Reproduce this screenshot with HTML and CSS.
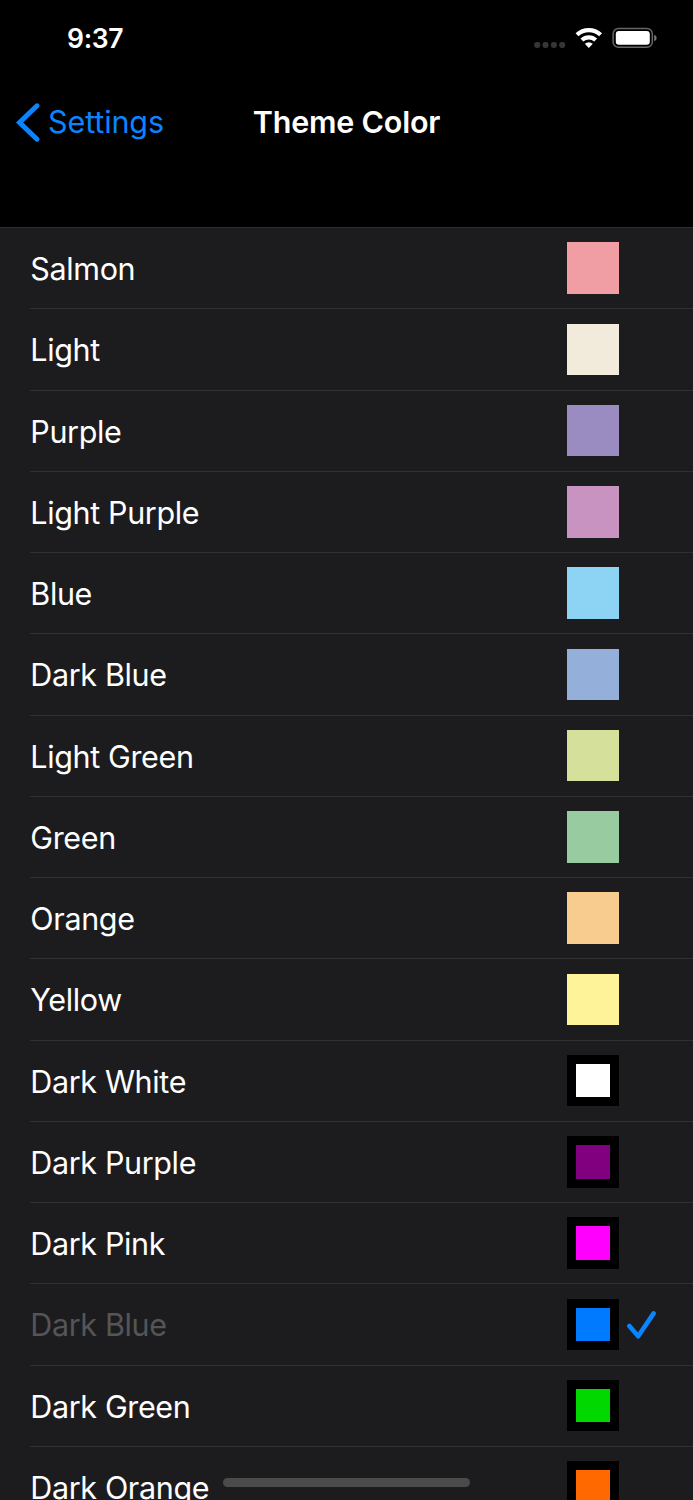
FILE: index.html
```html
<!DOCTYPE html>
<html lang="en">
<head>
<meta charset="utf-8">
<title>Theme Color</title>
<link rel="stylesheet" href="styles.css">
</head>
<body>
<div class="screen">
  <header class="header">
    <div class="status">
      <span class="time">9:37</span>
      <svg class="status-icons" width="124" height="24" viewBox="534 26 124 24">
        <g fill="#363636">
          <rect x="534.2" y="42" width="6" height="6" rx="2.4"/><rect x="542.5" y="42" width="6" height="6" rx="2.4"/><rect x="550.9" y="42" width="6" height="6" rx="2.4"/><rect x="559.2" y="42" width="6" height="6" rx="2.4"/>
        </g>
        <g fill="none" stroke="#fff" stroke-width="4.2">
          <path d="M577 34.8A17.2 17.2 0 0 1 600.6 34.8"/>
          <path d="M581.9 40.1A9.9 9.9 0 0 1 595.7 40.1"/>
        </g>
        <path d="M588.8 47.9L584.8 43.8Q588.8 40.5 592.8 43.8Z" fill="#fff"/>
        <rect x="613.1" y="28.5" width="39.2" height="18.8" rx="5.4" fill="none" stroke="#666" stroke-width="1.5"/>
        <rect x="615.8" y="31" width="34" height="13.8" rx="3.2" fill="#fff"/>
        <path d="M654.2 34.7Q656.7 35.4 656.7 38T654.2 41.3Z" fill="#777"/>
      </svg>
    </div>
    <nav class="nav">
      <a class="back">
        <svg class="chevron" width="26" height="42" viewBox="0 0 26 42"><path d="M22 4.8L4.6 21.5L22 38.2" fill="none" stroke="#0a84ff" stroke-width="5" stroke-linecap="round"/></svg>
        <span class="back-label">Settings</span>
      </a>
      <h1 class="title">Theme Color</h1>
    </nav>
  </header>
  <ul class="list">
    <li class="row"><span class="label">Salmon</span><i class="swatch salmon"></i></li>
    <li class="row"><span class="label">Light</span><i class="swatch light"></i></li>
    <li class="row"><span class="label">Purple</span><i class="swatch purple"></i></li>
    <li class="row"><span class="label">Light Purple</span><i class="swatch light-purple"></i></li>
    <li class="row"><span class="label">Blue</span><i class="swatch blue"></i></li>
    <li class="row"><span class="label">Dark Blue</span><i class="swatch dusk-blue"></i></li>
    <li class="row"><span class="label">Light Green</span><i class="swatch light-green"></i></li>
    <li class="row"><span class="label">Green</span><i class="swatch green"></i></li>
    <li class="row"><span class="label">Orange</span><i class="swatch orange"></i></li>
    <li class="row"><span class="label">Yellow</span><i class="swatch yellow"></i></li>
    <li class="row"><span class="label">Dark White</span><i class="swatch dark white"></i></li>
    <li class="row"><span class="label">Dark Purple</span><i class="swatch dark deep-purple"></i></li>
    <li class="row"><span class="label">Dark Pink</span><i class="swatch dark pink"></i></li>
    <li class="row selected"><span class="label">Dark Blue</span><i class="swatch dark deep-blue"></i><svg class="check" width="30" height="30" viewBox="0 0 30 30"><path d="M2.4 16L11.2 26.2L26.6 3.4" fill="none" stroke="#0a84ff" stroke-width="4.6" stroke-linecap="round" stroke-linejoin="round"/></svg></li>
    <li class="row"><span class="label">Dark Green</span><i class="swatch dark deep-green"></i></li>
    <li class="row"><span class="label">Dark Orange</span><i class="swatch dark deep-orange"></i></li>
  </ul>
  <div class="home-indicator"></div>
</div>
</body>
</html>
```
FILE: styles.css
```css
* { box-sizing: border-box; }
body { margin: 0; background: #000; color: #fff; font-family: Inter, "Liberation Sans", sans-serif; }
.screen { position: relative; height: 1500px; overflow: hidden; }
.header { height: 227px; }
.status { display: flex; justify-content: space-between; height: 76px; padding: 26px 35px 0 67px; }
.time { font-size: 26.5px; line-height: 25px; font-weight: 600; letter-spacing: -0.3px; }
.status-icons { display: block; }
.nav { display: grid; grid-template-columns: 1fr auto 1fr; align-items: center; height: 92px; }
.back { display: flex; align-items: center; padding-left: 15px; color: #0a84ff; }
.chevron { display: block; margin-right: 7px; }
.back-label { font-size: 30.5px; letter-spacing: -0.1px; padding-bottom: 2px; }
.title { margin: 0; padding-bottom: 2px; font-size: 30.5px; font-weight: 600; letter-spacing: -0.2px; }
.list { margin: 0; padding: 0; list-style: none; background: #1c1c1e; border-top: 1px solid #2d2d2f; }
.row { display: flex; align-items: center; height: 81.25px; margin-left: 30px; border-bottom: 1px solid #303032; }
.label { width: 537px; font-size: 30.5px; line-height: 40px; letter-spacing: -0.36px; padding-top: 2px; padding-left: 0.3px; }
.swatch { width: 51.7px; height: 51.7px; flex: none; }
.dark { border: 9px solid #000; }
.selected .label { color: #555557; }
.check { display: block; margin: 2px 0 0 8px; }
.salmon { background: #f09da3; }
.light { background: #f2ebdc; }
.purple { background: #9a8bc0; }
.light-purple { background: #c893c0; }
.blue { background: #8cd3f4; }
.dusk-blue { background: #94afda; }
.light-green { background: #d5e19a; }
.green { background: #98cba0; }
.orange { background: #f8cb8f; }
.yellow { background: #fef398; }
.white { background: #fff; }
.deep-purple { background: #800080; }
.pink { background: #f0f; }
.deep-blue { background: #007aff; }
.deep-green { background: #00d800; }
.deep-orange { background: #ff6900; }
.home-indicator { position: absolute; left: 223px; top: 1478px; width: 247px; height: 8.5px; border-radius: 5px; background: #4b4b4c; }
```
